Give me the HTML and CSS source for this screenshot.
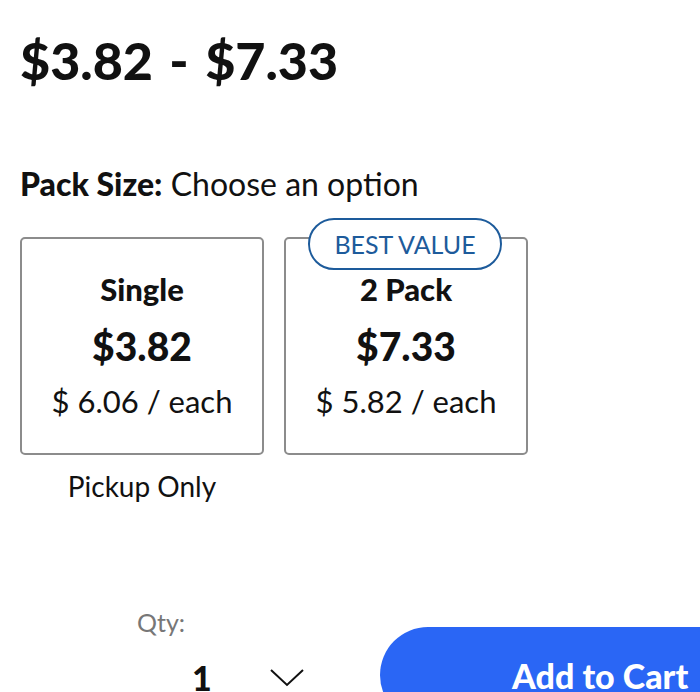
FILE: index.html
```html
<!DOCTYPE html>
<html>
<head>
<meta charset="utf-8">
<link rel="stylesheet" href="styles.css">
</head>
<body>
<div class="page">
  <h1 class="price-range">$3.82 - $7.33</h1>
  <div class="pack-label"><b>Pack Size:</b> Choose an option</div>
  <div class="options">
    <div class="option-col">
      <div class="card">
        <div class="card-name">Single</div>
        <div class="card-price">$3.82</div>
        <div class="card-unit">$ 6.06 / each</div>
      </div>
      <div class="card-note">Pickup Only</div>
    </div>
    <div class="option-col">
      <div class="card">
        <span class="badge">BEST VALUE</span>
        <div class="card-name">2 Pack</div>
        <div class="card-price">$7.33</div>
        <div class="card-unit">$ 5.82 / each</div>
      </div>
    </div>
  </div>
  <div class="buy-row">
    <div class="qty">
      <div class="qty-label">Qty:</div>
      <div class="qty-select">
        <span class="qty-value">1</span>
        <svg class="chevron" width="34" height="18" viewBox="0 0 34 18"><path d="M1 1 L17 16 L33 1" fill="none" stroke="#111" stroke-width="2"/></svg>
      </div>
    </div>
    <button class="add-btn">Add to Cart</button>
  </div>
</div>
</body>
</html>
```
FILE: styles.css
```css
html, body {
  margin: 0;
  padding: 0;
  background: #fff;
}
body {
  font-family: Lato, "Open Sans", sans-serif;
  color: #111;
  overflow: hidden;
}
.page {
  padding: 0 20px;
  width: 700px;
  height: 692px;
  box-sizing: border-box;
  overflow: hidden;
}
.price-range {
  margin: 0;
  padding-top: 30px;
  font-size: 52px;
  line-height: 60px;
  font-weight: 900;
  word-spacing: 4px;
}
.pack-label {
  margin-top: 76px;
  font-size: 32px;
  line-height: 36px;
}
.pack-label b {
  font-weight: 900;
}
.options {
  display: flex;
  gap: 20px;
  margin-top: 35px;
}
.option-col {
  display: flex;
  flex-direction: column;
  align-items: center;
  width: 244px;
}
.card {
  position: relative;
  box-sizing: border-box;
  width: 244px;
  height: 218px;
  border: 2px solid #8c8c8c;
  border-radius: 5px;
  display: flex;
  flex-direction: column;
  align-items: center;
  padding-top: 31px;
}
.badge {
  position: absolute;
  top: -21px;
  left: 22px;
  width: 194px;
  height: 52px;
  box-sizing: border-box;
  border: 2px solid #1d5b9b;
  border-radius: 26px;
  background: #fff;
  color: #1d5b9b;
  font-size: 25px;
  line-height: 48px;
  text-align: center;
}
.card-name {
  font-size: 31px;
  line-height: 38px;
  font-weight: 900;
}
.card-price {
  margin-top: 16px;
  font-size: 39px;
  line-height: 44px;
  font-weight: 900;
}
.card-unit {
  margin-top: 14px;
  font-size: 31px;
  line-height: 38px;
}
.card-note {
  margin-top: 13px;
  font-size: 28px;
  line-height: 36px;
}
.buy-row {
  display: flex;
  margin-top: 96px;
}
.qty {
  flex: none;
  margin-left: 117px;
  width: 243px;
  padding-top: 6px;
}
.qty-label {
  color: #777;
  font-size: 25px;
  line-height: 32px;
}
.qty-select {
  display: flex;
  align-items: center;
  margin-top: 20px;
  padding-left: 55px;
}
.qty-value {
  font-size: 34px;
  font-weight: 900;
  line-height: 40px;
}
.chevron {
  margin-left: 58px;
}
.add-btn {
  flex: none;
  width: 400px;
  height: 96px;
  border: none;
  border-radius: 48px;
  background: #2a66f5;
  color: #fff;
  font-family: Lato, "Open Sans", sans-serif;
  font-size: 34px;
  font-weight: 900;
  text-align: left;
  padding: 0 0 0 132px;
  margin-top: 27px;
  align-self: flex-start;
}
```
